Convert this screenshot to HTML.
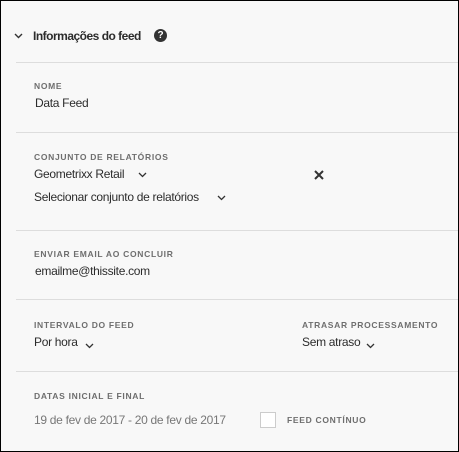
<!DOCTYPE html><html><head><style>
body{margin:0;width:459px;height:452px;overflow:hidden;font-family:"Liberation Sans",sans-serif;}
.f{position:absolute;left:0;top:0;width:457px;height:450px;border:1px solid #000;background:#f8f8f8;}
.a{position:absolute;white-space:nowrap;}
.l{font-size:8.5px;color:#6e6e6e;letter-spacing:0.7px;font-weight:bold;}
.v{font-size:12px;color:#2c2c2c;letter-spacing:-0.3px;}
.h{position:absolute;left:15px;right:0;height:1px;background:#ddd;}
svg{position:absolute;}
</style></head><body><div class="f">
<svg style="left:13px;top:32px" width="9" height="6" viewBox="0 0 9 6"><path d="M1 1l3.5 3.5L8 1" fill="none" stroke="#333" stroke-width="1.4"/></svg>
<div class="a" style="left:32px;top:28px;font-size:12px;font-weight:bold;color:#2c2c2c;letter-spacing:-0.5px">Informações do feed</div>
<div class="a" style="left:153px;top:28px;width:13px;height:13px;border-radius:50%;background:#333;color:#fff;font-size:10px;font-weight:bold;text-align:center;line-height:13px">?</div>
<div class="h" style="top:61px"></div>
<div class="a l" style="left:33px;top:80px">NOME</div>
<div class="a v" style="left:34px;top:95px">Data Feed</div>
<div class="h" style="top:131px"></div>
<div class="a l" style="left:33px;top:151px">CONJUNTO DE RELATÓRIOS</div>
<div class="a v" style="left:33px;top:166px">Geometrixx Retail</div>
<svg style="left:137px;top:171px" width="9" height="6" viewBox="0 0 9 6"><path d="M1 1l3.5 3.5L8 1" fill="none" stroke="#333" stroke-width="1.3"/></svg>
<div class="a v" style="left:33px;top:189px">Selecionar conjunto de relatórios</div>
<svg style="left:216px;top:194px" width="9" height="6" viewBox="0 0 9 6"><path d="M1 1l3.5 3.5L8 1" fill="none" stroke="#333" stroke-width="1.3"/></svg>
<svg style="left:313px;top:169px" width="10" height="10" viewBox="0 0 10 10"><path d="M1 1l8 8M9 1l-8 8" stroke="#333" stroke-width="2"/></svg>
<div class="h" style="top:229px"></div>
<div class="a l" style="left:33px;top:248px">ENVIAR EMAIL AO CONCLUIR</div>
<div class="a v" style="left:34px;top:263px">emailme@thissite.com</div>
<div class="h" style="top:298px"></div>
<div class="a l" style="left:33px;top:319px">INTERVALO DO FEED</div>
<div class="a v" style="left:33px;top:334px">Por hora</div>
<svg style="left:84px;top:342px" width="9" height="6" viewBox="0 0 9 6"><path d="M1 1l3.5 3.5L8 1" fill="none" stroke="#333" stroke-width="1.3"/></svg>
<div class="a l" style="left:301px;top:319px">ATRASAR PROCESSAMENTO</div>
<div class="a v" style="left:301px;top:334px">Sem atraso</div>
<svg style="left:365px;top:342px" width="9" height="6" viewBox="0 0 9 6"><path d="M1 1l3.5 3.5L8 1" fill="none" stroke="#333" stroke-width="1.3"/></svg>
<div class="h" style="top:370px"></div>
<div class="a l" style="left:33px;top:390px">DATAS INICIAL E FINAL</div>
<div class="a v" style="left:33px;top:412px;color:#777">19 de fev de 2017 - 20 de fev de 2017</div>
<div class="a" style="left:259px;top:411px;width:16px;height:16px;border:1px solid #ccc;background:#fff;box-sizing:border-box"></div>
<div class="a l" style="left:286px;top:414px">FEED CONTÍNUO</div>
</div></body></html>
